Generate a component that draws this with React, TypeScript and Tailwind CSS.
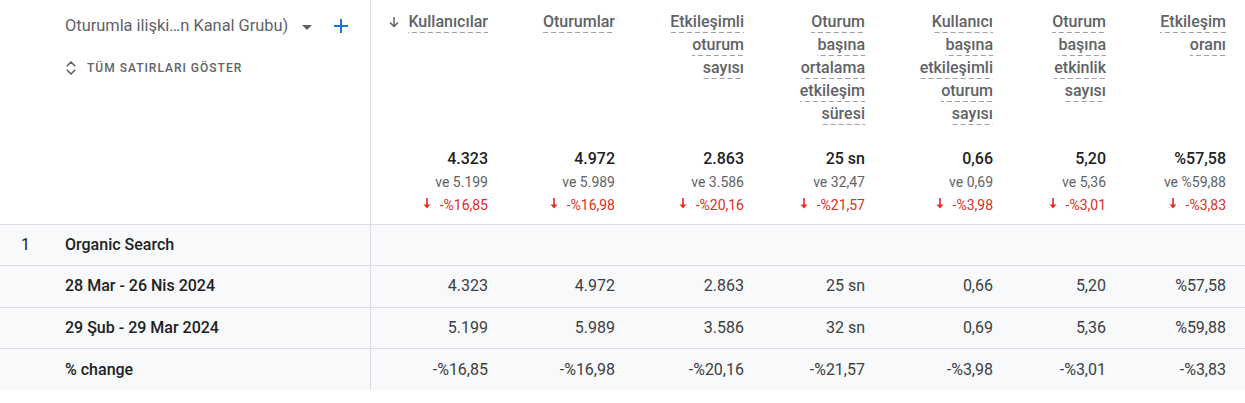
import { ChevronsUpDown } from 'lucide-react';

const cols = 'grid grid-cols-[371px_117px_127px_129px_121px_128px_113px_120px_1fr]';

const headers: string[][] = [
  ['Kullanıcılar'],
  ['Oturumlar'],
  ['Etkileşimli', 'oturum', 'sayısı'],
  ['Oturum', 'başına', 'ortalama', 'etkileşim', 'süresi'],
  ['Kullanıcı', 'başına', 'etkileşimli', 'oturum', 'sayısı'],
  ['Oturum', 'başına', 'etkinlik', 'sayısı'],
  ['Etkileşim', 'oranı'],
];

const totals = [
  { v: '4.323', prev: 've 5.199', d: '-%16,85' },
  { v: '4.972', prev: 've 5.989', d: '-%16,98' },
  { v: '2.863', prev: 've 3.586', d: '-%20,16' },
  { v: '25 sn', prev: 've 32,47', d: '-%21,57' },
  { v: '0,66', prev: 've 0,69', d: '-%3,98' },
  { v: '5,20', prev: 've 5,36', d: '-%3,01' },
  { v: '%57,58', prev: 've %59,88', d: '-%3,83' },
];

const rows = [
  { n: '1', label: 'Organic Search', vals: [] as string[] },
  { n: '', label: '28 Mar - 26 Nis 2024', vals: ['4.323', '4.972', '2.863', '25 sn', '0,66', '5,20', '%57,58'] },
  { n: '', label: '29 Şub - 29 Mar 2024', vals: ['5.199', '5.989', '3.586', '32 sn', '0,69', '5,36', '%59,88'] },
  { n: '', label: '% change', vals: ['-%16,85', '-%16,98', '-%20,16', '-%21,57', '-%3,98', '-%3,01', '-%3,83'] },
];

function RedArrow() {
  return (
    <svg width="8" height="11" viewBox="0 0 8 11" className="inline-block mr-[9px] -mt-[3px]">
      <path d="M3.2 0h1.6v6.5H7.5L4 10.5 0.5 6.5h2.7z" fill="#d93025" />
    </svg>
  );
}

function SortArrow() {
  return (
    <svg width="12" height="12" viewBox="0 0 12 12" className="inline-block mr-[8px] mb-[2px]">
      <path d="M6 1v9M2 6.5l4 4 4-4" stroke="#5f6368" strokeWidth="1.5" fill="none" />
    </svg>
  );
}

export default function App() {
  return (
    <div className="w-[1245px] h-[403px] bg-white font-['Roboto',sans-serif] text-[#202124]">
      {/* header */}
      <div className={`${cols} border-b border-[#dadce0]`}>
        <div className="border-r border-[#dadce0] pl-[65px] pt-[14px]">
          <div className="flex items-center h-6 text-[16.4px] text-[#5f6368]">
            <span>Oturumla ilişki…n Kanal Grubu)</span>
            <svg width="10" height="5" viewBox="0 0 10 5" className="ml-[14px] mt-[3px]">
              <path d="M0 0h10L5 5z" fill="#5f6368" />
            </svg>
            <svg width="14" height="14" viewBox="0 0 14 14" className="ml-[22px]">
              <path d="M7 0v14M0 7h14" stroke="#1a73e8" strokeWidth="2" />
            </svg>
          </div>
          <div className="flex items-center mt-[21px] text-[12px] font-medium tracking-[1px] text-[#5f6368]">
            <ChevronsUpDown size={18} strokeWidth={2.2} className="-ml-[3px] mr-[7px]" />
            TÜM SATIRLARI GÖSTER
          </div>
        </div>
        {headers.map((h, i) => (
          <div key={i} className="flex flex-col items-end pt-[11px] pb-[8px]">
            <div className="h-[124px] flex flex-col items-end">
              {h.map((w, j) => (
                <div key={j} className="h-[23px] flex items-center text-[16px] font-medium text-[#5f6368] leading-none">
                  {i === 0 && j === 0 && <SortArrow />}
                  <span className="pb-[3px] pt-[2px] bg-[linear-gradient(to_right,#9aa0a6_62%,transparent_0)] bg-[length:8px_1px] bg-repeat-x bg-bottom">
                    {w}
                  </span>
                </div>
              ))}
            </div>
            <div className="mt-[12px] text-[16px] font-medium text-[#202124] leading-[23px]">{totals[i].v}</div>
            <div className="text-[14px] text-[#5f6368] leading-[24px]">{totals[i].prev}</div>
            <div className="text-[14px] text-[#d93025] leading-[22px] flex items-center">
              <RedArrow />
              {totals[i].d}
            </div>
          </div>
        ))}
        <div />
      </div>
      {/* rows */}
      {rows.map((r, i) => (
        <div key={i} className={`${cols} bg-[#f8f9fa] h-[41.3px] border-b border-[#dadce0] last:border-b-0 text-[16px]`}>
          <div className="border-r border-[#dadce0] flex items-center">
            <span className="w-[65px] pl-[21px]">{r.n}</span>
            <span className="font-medium">{r.label}</span>
          </div>
          {Array.from({ length: 7 }).map((_, k) => (
            <div key={k} className="flex items-center justify-end text-[#3c4043]">
              {r.vals[k] ?? ''}
            </div>
          ))}
          <div />
        </div>
      ))}
    </div>
  );
}
